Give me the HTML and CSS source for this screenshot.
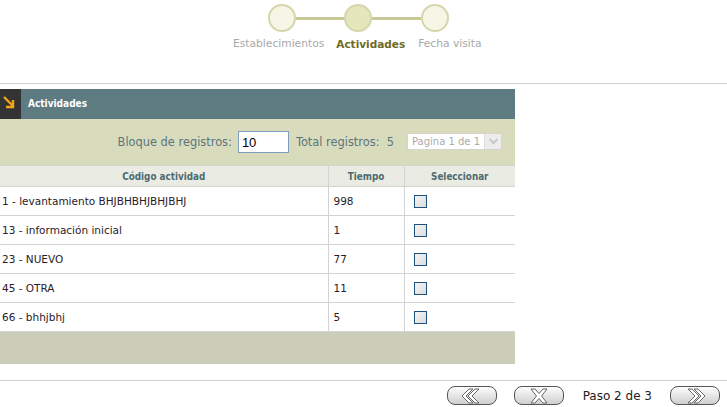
FILE: index.html
```html
<!DOCTYPE html>
<html lang="es">
<head>
<meta charset="utf-8">
<title>Actividades</title>
<link rel="stylesheet" href="styles.css">
</head>
<body>
<div class="wizard">
  <div class="steps">
    <span class="dot"></span><span class="bar"></span><span class="dot active"></span><span class="bar"></span><span class="dot"></span>
  </div>
  <div class="labels">
    <span class="lbl">Establecimientos</span>
    <span class="lbl current">Actividades</span>
    <span class="lbl">Fecha visita</span>
  </div>
</div>
<div class="rule rule-top"></div>
<div class="panel">
  <div class="panel-head">
    <div class="panel-icon">
      <svg width="21" height="30" viewBox="0 0 21 30"><path d="M4 8 L12.5 16.5 M6 18 H13 V11" fill="none" stroke="#f2a516" stroke-width="2.4"/></svg>
    </div>
    <div class="panel-title">Actividades</div>
  </div>
  <div class="filter">
    <span class="flabel">Bloque de registros:</span>
    <input class="finput" type="text" value="10">
    <span class="flabel total">Total registros:&nbsp; 5</span>
    <div class="fselect"><span class="fsel-text">Pagina 1 de 1</span><span class="fsel-btn"><svg width="11" height="8" viewBox="0 0 11 8"><path d="M1.5 2 L5.5 6 L9.5 2" fill="none" stroke="#c8c8c8" stroke-width="2"/></svg></span></div>
  </div>
  <table class="grid">
    <thead>
      <tr><th class="c1">Código actividad</th><th class="c2">Tiempo</th><th class="c3">Seleccionar</th></tr>
    </thead>
    <tbody>
      <tr><td class="c1">1 - levantamiento BHJBHBHJBHJBHJ</td><td class="c2">998</td><td class="c3"><span class="chk"></span></td></tr>
      <tr><td class="c1">13 - información inicial</td><td class="c2">1</td><td class="c3"><span class="chk"></span></td></tr>
      <tr><td class="c1">23 - NUEVO</td><td class="c2">77</td><td class="c3"><span class="chk"></span></td></tr>
      <tr><td class="c1">45 - OTRA</td><td class="c2">11</td><td class="c3"><span class="chk"></span></td></tr>
      <tr><td class="c1">66 - bhhjbhj</td><td class="c2">5</td><td class="c3"><span class="chk"></span></td></tr>
    </tbody>
  </table>
  <div class="panel-foot"></div>
</div>
<div class="rule rule-bottom"></div>
<div class="nav">
  <button class="pill" type="button" aria-label="Anterior">
    <svg width="24" height="16" viewBox="0 0 24 16"><path d="M9 1 L2 8 L9 15 H13 L6 8 L13 1 Z M15 1 L8 8 L15 15 H19 L12 8 L19 1 Z" fill="#fff" stroke="#666" stroke-width="1" stroke-linejoin="round"/></svg>
  </button>
  <button class="pill" type="button" aria-label="Cancelar">
    <svg width="22" height="16" viewBox="0 0 22 16"><path d="M3 1 H7 L11 5.5 L15 1 H19 L13.5 8 L19 15 H15 L11 10.5 L7 15 H3 L8.5 8 Z" fill="#fff" stroke="#666" stroke-width="1" stroke-linejoin="round"/></svg>
  </button>
  <span class="paso">Paso 2 de 3</span>
  <button class="pill" type="button" aria-label="Siguiente">
    <svg width="24" height="16" viewBox="0 0 24 16"><path d="M15 1 L22 8 L15 15 H11 L18 8 L11 1 Z M9 1 L16 8 L9 15 H5 L12 8 L5 1 Z" fill="#fff" stroke="#666" stroke-width="1" stroke-linejoin="round"/></svg>
  </button>
</div>
</body>
</html>
```
FILE: styles.css
```css
* { box-sizing: border-box; }
html, body { margin: 0; padding: 0; background: #fff; }
body { font-family: "DejaVu Sans", Verdana, sans-serif; font-size: 11px; color: #222; width: 727px; }

.wizard { height: 83px; padding-top: 4px; }
.steps { display: flex; align-items: center; justify-content: flex-start; padding-left: 268px; height: 28px; }
.dot { width: 28px; height: 28px; border-radius: 50%; background: #f6f6e6; border: 2px solid #d6d6ac; }
.dot.active { background: #e6e6bc; }
.bar { width: 48px; height: 3px; background: #c8c898; }
.steps .bar:nth-child(4) { width: 49px; }
.labels { display: flex; padding-left: 233px; margin-top: 5px; font-size: 10.7px; line-height: 14px; }
.lbl { color: #a8a8a8; margin-right: 12px; }
.lbl.current { color: #6f6a24; font-weight: bold; margin-right: 13px; font-size: 10.5px; }

.rule { height: 1px; background: #cfcfcf; }
.rule-top { margin-bottom: 5px; }

.panel { width: 515px; }
.panel-head { display: flex; height: 30px; background: #5f7b82; }
.panel-icon { width: 21px; height: 30px; background: #333; }
.panel-icon svg { display: block; }
.panel-title { color: #fff; font-family: "DejaVu Sans Condensed", "DejaVu Sans", sans-serif; font-weight: bold; font-size: 10px; line-height: 30px; padding-left: 7px; }

.filter { height: 46px; background: #d8dcbd; display: flex; align-items: center; justify-content: flex-end; padding-right: 13px; }
.flabel { color: #5d757b; font-size: 11.4px; }
.finput { width: 51px; height: 22px; margin: 0 7px 0 6px; border: 1px solid #7d9dbf; background: #fff; font-family: "Liberation Sans", Arial, sans-serif; font-size: 13px; padding: 0 0 0 3px; color: #000; }
.total { margin-right: 13px; }
.fselect { display: flex; width: 95px; height: 17px; background: #fff; border: 1px solid #d4d4cc; margin-top: -2px; }
.fsel-text { flex: 1; color: #aaa; font-size: 10px; line-height: 15px; padding-left: 4px; white-space: nowrap; }
.fsel-btn { width: 17px; background: #ececec; border-left: 1px solid #ddd; display: flex; align-items: center; justify-content: center; }

.grid { width: 515px; border-collapse: collapse; table-layout: fixed; }
.grid th, .grid td { border: 1px solid #d3d3d3; }
.grid tr > :first-child { border-left: none; }
.grid tr > :last-child { border-right: none; }
.grid th { height: 21px; background: #eaece4; color: #4e6a70; font-family: "DejaVu Sans Condensed", "DejaVu Sans", sans-serif; font-weight: bold; font-size: 9.8px; text-align: center; padding: 0; }
.grid td { height: 29px; background: #fff; font-size: 10.5px; padding: 0; color: #2a1a2a; }
.c1 { width: 328px; }
.c2 { width: 76px; }
.c3 { width: 111px; }
td.c1 { padding-left: 2px; }
td.c2 { padding-left: 5px; }
td.c3 { padding-left: 9px; }
.chk { display: block; width: 13px; height: 13px; border: 1px solid #1d5180; background: linear-gradient(135deg, #f4f4f4, #dcdcdc); }

.panel-foot { height: 32px; background: #cbcdb9; }

.rule-bottom { margin-top: 16px; }
.nav { display: flex; align-items: center; justify-content: flex-end; padding: 5px 7px 0 0; }
.pill { width: 50px; height: 19px; border: 1px solid #555; border-radius: 8px; background: linear-gradient(180deg, #fdfdfd 0%, #e4e4e4 55%, #cfcfcf 100%); padding: 0; display: flex; align-items: center; justify-content: center; margin-left: 17px; }
.pill svg { display: block; }
.paso { font-family: "DejaVu Sans", Tahoma, sans-serif; font-size: 12px; color: #222; margin-left: 19px; margin-right: 1px; }
```
